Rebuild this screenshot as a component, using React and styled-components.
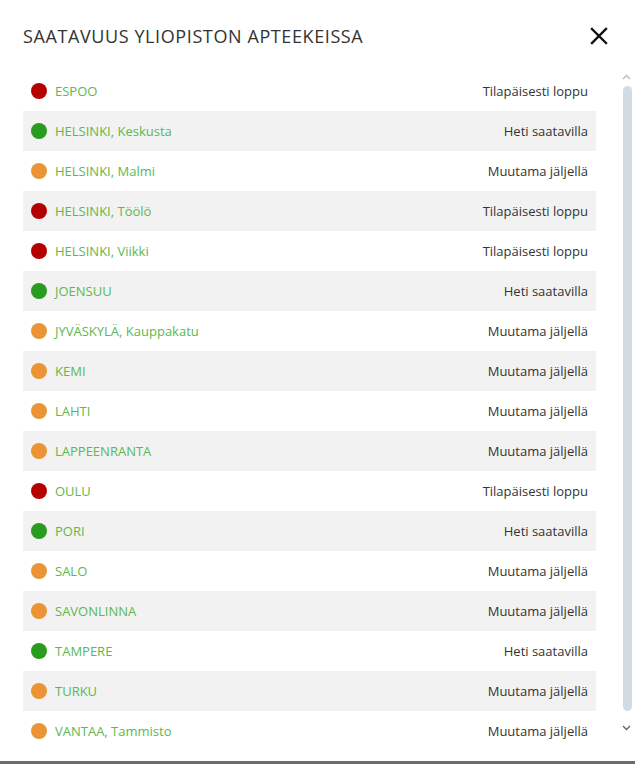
import React from 'react';
import styled, { createGlobalStyle } from 'styled-components';

const GlobalStyle = createGlobalStyle`
  html, body { margin: 0; padding: 0; background: #fff; }
  body { font-family: "Open Sans", "Liberation Sans", sans-serif; }
`;

const STATUS = {
  out: { color: '#b50000', label: 'Tilapäisesti loppu' },
  now: { color: '#2a9b1f', label: 'Heti saatavilla' },
  few: { color: '#ea9434', label: 'Muutama jäljellä' },
};

const pharmacies = [
  ['ESPOO', 'out'],
  ['HELSINKI, Keskusta', 'now'],
  ['HELSINKI, Malmi', 'few'],
  ['HELSINKI, Töölö', 'out'],
  ['HELSINKI, Viikki', 'out'],
  ['JOENSUU', 'now'],
  ['JYVÄSKYLÄ, Kauppakatu', 'few'],
  ['KEMI', 'few'],
  ['LAHTI', 'few'],
  ['LAPPEENRANTA', 'few'],
  ['OULU', 'out'],
  ['PORI', 'now'],
  ['SALO', 'few'],
  ['SAVONLINNA', 'few'],
  ['TAMPERE', 'now'],
  ['TURKU', 'few'],
  ['VANTAA, Tammisto', 'few'],
];

const Modal = styled.div`
  width: 635px;
  height: 764px;
  box-sizing: border-box;
  border-bottom: 3px solid #6b6b6b;
  display: flex;
  flex-direction: column;
  overflow: hidden;
`;

const Header = styled.div`
  height: 71px;
  padding: 0 27px 0 23px;
  display: flex;
  align-items: center;
  justify-content: space-between;
  box-sizing: border-box;
  h2 {
    margin: 0;
    font-size: 18px;
    font-weight: 400;
    color: #333;
    letter-spacing: 0.6px;
  }
`;

const CloseButton = styled.button`
  border: none;
  background: none;
  padding: 0;
  width: 18px;
  height: 18px;
  cursor: pointer;
  display: flex;
`;

const Body = styled.div`
  display: flex;
  height: 670px;
`;

const List = styled.ul`
  list-style: none;
  margin: 0;
  padding: 0 0 0 23px;
  width: 596px;
  box-sizing: border-box;
  flex-shrink: 0;
`;

const Row = styled.li`
  height: 40px;
  display: flex;
  align-items: center;
  padding: 0 8px;
  background: ${p => (p.$striped ? '#f2f2f2' : 'transparent')};
  font-size: 13px;
`;

const Dot = styled.span`
  width: 16px;
  height: 16px;
  border-radius: 50%;
  background: ${p => p.$color};
  margin-right: 8px;
  flex-shrink: 0;
`;

const Name = styled.span`
  color: #5cb84f;
  flex: 1;
`;

const Status = styled.span`
  color: #333;
`;

const Rail = styled.div`
  margin-left: 24px;
  width: 12px;
  display: flex;
  flex-direction: column;
  align-items: center;
`;

const Arrow = styled.svg`
  width: 9px;
  height: 6px;
  margin: ${p => (p.$top ? '3px 0 6px' : '14px 0 0')};
`;

const Thumb = styled.div`
  width: 9px;
  height: 625px;
  background: #d3dbe2;
  border-radius: 5px;
  margin-left: 3px;
`;

export default function App() {
  return (
    <>
      <GlobalStyle />
      <Modal>
        <Header>
          <h2>SAATAVUUS YLIOPISTON APTEEKEISSA</h2>
          <CloseButton aria-label="Sulje">
            <svg width="18" height="18" viewBox="0 0 18 18">
              <path d="M2 2 L16 16 M16 2 L2 16" stroke="#111" strokeWidth="2.4" strokeLinecap="square" />
            </svg>
          </CloseButton>
        </Header>
        <Body>
          <List>
            {pharmacies.map(([name, key], i) => (
              <Row key={name} $striped={i % 2 === 1}>
                <Dot $color={STATUS[key].color} />
                <Name>{name}</Name>
                <Status>{STATUS[key].label}</Status>
              </Row>
            ))}
          </List>
          <Rail>
            <Arrow $top viewBox="0 0 9 6">
              <path d="M1 5 L4.5 1.5 L8 5" fill="none" stroke="#bbb" strokeWidth="1.4" />
            </Arrow>
            <Thumb />
            <Arrow viewBox="0 0 9 6">
              <path d="M1 1 L4.5 4.5 L8 1" fill="none" stroke="#666" strokeWidth="1.4" />
            </Arrow>
          </Rail>
        </Body>
      </Modal>
    </>
  );
}
